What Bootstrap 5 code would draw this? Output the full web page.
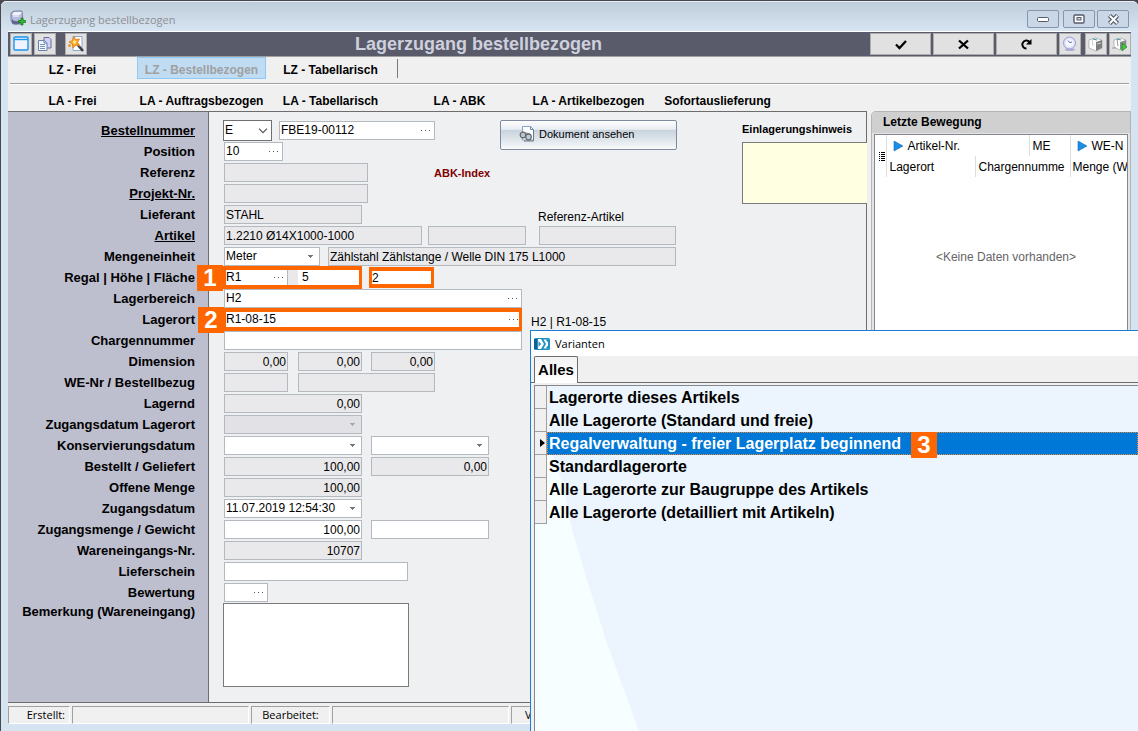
<!DOCTYPE html>
<html lang="de">
<head>
<meta charset="utf-8">
<meta name="viewport" content="width=device-width, initial-scale=1">
<title>Lagerzugang bestellbezogen</title>
<link href="https://cdn.jsdelivr.net/npm/bootstrap@5.3.0/dist/css/bootstrap.min.css" rel="stylesheet">
<style>
body{font-family:"Liberation Sans",Arial,sans-serif;font-size:12px;line-height:16px;color:#000;background:#4a464f}
.segoe{font-family:"Open Sans","Noto Sans",sans-serif;font-size:11px}
.win{border:1px solid #4a464f;border-width:1px 0 0 1px;border-radius:6px 6px 0 0;background:#d6e4f1;padding:0 7px 7px}
.win-title{height:30px;margin:0 -7px;padding:8px 9px 0 9px;color:#8e8e92;background:linear-gradient(#bfcddb,#d7e5f2);border-radius:6px 6px 0 0;border-top:1px solid #e6eef5}
.cap{width:32px;height:18px;padding:0;border:1px solid #8495ac;border-radius:2px;background:#c9d7e6;display:flex;align-items:center;justify-content:center}
.toolbar{background:#595b6b;border-top:1px solid #fff;border-bottom:1px solid #a0a0a0;padding:1px 0 1px 2px;height:26px}
.toolbar h1{font-size:18px;line-height:22px;color:#ced0dc;font-weight:bold;margin:0}
.tb{width:22px;height:22px;padding:0;border:1px solid #adadad;background:#e1e1e1;display:flex;align-items:center;justify-content:center}
.tb-wide{width:61px}
.menus{background:#f0f0f0}
.menus a{width:129px;text-align:center;color:#000;font-weight:bold;text-decoration:none;padding:5px 0 2px;line-height:16px}
.menu-a{height:27px;margin:0 2px;border-bottom:1px solid #a0a0a0}
.menu-b{height:27px;margin:0 2px;border-top:1px solid #fff;padding-top:3px}
.menus a.current{background:#c0dcf3;color:#a0a0a0;border:1px solid #90c8f6;height:22px;padding-top:4px}
.menus .nav-in{margin-left:-2px}
.bar{width:1px;height:19px;background:#7a7a7a;margin:2px 0 0 2px}
.mainform{border:1px solid #6d6d6d;border-width:1px 1px 1px 0;background:linear-gradient(to right,#bdbece 200px,#6d6d6d 200px,#6d6d6d 201px,#eff0f2 201px)}
.rows{padding-top:8px}
.r{display:flex;align-items:center;height:21px}
.r>label:first-child{width:187px;margin-right:29px;text-align:right;font-size:13px;font-weight:bold;flex:none}
.r>.u{text-decoration:underline}
.f{height:19px;border:1px solid #b4b8bf;background:#fff;display:flex;align-items:center;flex:none;font-size:12px;padding:0 3px 0 1px;border-radius:0;color:#000;line-height:15px}
.f input{border:0;background:transparent;padding:0;width:100%;min-width:0;outline:0;color:#000;line-height:15px}
input.f{outline:0}
.f.text-end{padding-right:1px}
.ro{background:#e9e9eb}
select.f{appearance:none;background:#fff url("data:image/svg+xml,%3Csvg xmlns='http://www.w3.org/2000/svg' width='7' height='4'%3E%3Cpath d='M1 0h5v1h-1v1h-1v1h-1v-1h-1v-1h-1z' fill='%23777'/%3E%3C/svg%3E") no-repeat right 5px center}
select.f.dis{background-color:#e2e1e6;opacity:1;background-image:url("data:image/svg+xml,%3Csvg xmlns='http://www.w3.org/2000/svg' width='7' height='4'%3E%3Cpath d='M1 0h5v1h-1v1h-1v1h-1v-1h-1v-1h-1z' fill='%23aaa'/%3E%3C/svg%3E")}
select.f.big{height:21px;border-color:#707070;background-image:url("data:image/svg+xml,%3Csvg xmlns='http://www.w3.org/2000/svg' width='10' height='6'%3E%3Cpath d='M1 .7l4 4 4-4' fill='none' stroke='%23555' stroke-width='1.2'/%3E%3C/svg%3E");background-position:right 3px center;margin-left:-1px}
.dots{border:0;background:none;padding:0;width:10px;height:15px;flex:none;display:flex;align-items:center}
.w44{width:44px}.w49{width:49px}.w59{width:59px}.w64{width:64px}.w96{width:96px}.w98{width:98px}.w118{width:118px}.w137{width:137px}.w138{width:138px}.w144{width:144px}.w156{width:156px}.w184{width:184px}.w198{width:198px}.w298{width:298px}.w348{width:348px}
.g6{margin-left:6px}.g8{margin-left:8px}.g9{margin-left:9px}.g13{margin-left:13px}
.g10{margin-left:10px}
.hl{display:flex;height:23px;border:3px solid #f60;border-width:4px 3px 4px 3px;margin-left:-1px;background:#e9e9eb;flex:none}
.hl .f{border:0;height:15px;padding-left:0}
.hl .f.split{border-right:1px solid #b4b8bf}
.step{width:26px;height:26px;background:#f60;color:#fff;font-size:24px;line-height:26px;font-weight:bold;text-align:center;flex:none}
.docbtn{width:177px;height:30px;border:1px solid #7f8ba0;border-radius:2px;background:linear-gradient(#fdfdfe,#e9edf2 30%,#c9d3dd 32%,#dde4ea 65%,#fafbfc);font-size:11px;padding:0 0 2px 18px;display:flex;align-items:center;align-self:flex-start;color:#000}
.hint{width:124px;padding-top:9px}
.hint textarea{width:125px;height:62px;display:block;background:#ffffe1;border:1px solid #7a7a7a;border-right:0;resize:none;margin-top:5px}
.abk{color:#800000;font-weight:bold;font-size:11px;margin-left:66px}
.note{width:186px;height:84px;border:1px solid #7a7a7a;margin-left:-1px;resize:none;background:#fff;flex:none}
.side{width:260px;border:1px solid #b5b5b5;border-bottom:0;border-radius:5px 0 0 0;background:#e4e4e4;margin-left:4px}
.side h2{font-size:12px;font-weight:bold;background:#d0d0d0;line-height:20px;height:21px;margin:0;padding-left:11px;border-radius:5px 0 0 0}
.grid{border:1px solid #828790;background:#fff;margin:1px 2px 0 2px}
.grid table{table-layout:fixed;width:252px}
.grid th{font-weight:normal;white-space:nowrap;overflow:hidden;height:21px;padding:0 0 0 3px;border-left:1px solid #ddd}
.grid th.last{padding-left:2px}
.grid td{color:#666;text-align:center;padding:72px 0 0 10px}
.status{height:21px;background:#f0f0f0;padding-top:3px;gap:2px}
.status div{border:1px solid #a0a0a0;border-color:#a0a0a0 #fff #fff #a0a0a0;height:18px}
.dlg{position:absolute;left:530px;top:330px;right:0;bottom:0;border:1px solid #1a7fd4;border-width:1px 0 0 1px;background:#f0f0f0;overflow:hidden}
.dlg-title{height:25px;background:#fff;padding-left:3px;gap:5px}
.tabs{height:27px;padding-left:3px;border-bottom:1px solid #6d6d6d;flex:none}
.tabs button{width:44px;height:27px;border:1px solid #6d6d6d;border-bottom:0;border-radius:2px 2px 0 0;background:linear-gradient(#f3f3f3,#fff);font-size:15px;font-weight:bold;padding:0;white-space:nowrap}
.list{border:1px solid #828790;border-width:1px 0 0 1px;margin:2px 0 0 3px;background:#ecf5fd;position:relative}
.list>svg{position:absolute;left:0;top:62px}
.it{position:relative;display:flex;width:100%;height:23px;padding:0;border:0;background:none;font-size:16px;line-height:24px;font-weight:bold;text-align:left;color:#000}
.it i{width:12px;height:23px;background:#f0f0f0;border:1px solid #a0a0a0;border-width:0 1px 1px 0;flex:none;display:flex;align-items:center;justify-content:flex-end}
.it span{padding-left:2px}
.it.sel span:not(.step){background:#0078d7;color:#fff;flex:1;border:1px dotted #e08a3c;padding-left:1px;line-height:22px}
.it .step{position:absolute;left:376px;top:0;padding:0;z-index:1}
</style>
</head>
<body>
<div class="vh-100 position-relative overflow-hidden">
<div class="win h-100 d-flex flex-column">
  <header class="win-title d-flex align-items-start flex-shrink-0">
    <svg width="16" height="16" viewBox="0 0 16 16" class="me-1"><path d="M1 3l3-2h8l1 10-2 3H3l-2-3z" fill="#b6badc" stroke="#6d6f9c" stroke-width=".8"/><path d="M4 2h8l-2 3H2z" fill="#f1f2fa"/><path d="M2 9c2 3 7 3 10 0v3c-3 3-8 3-10 1z" fill="#60668e"/><path d="M3 6h6" stroke="#fff"/><path d="M11 8h2v2.500h2.500v2H13V15h-2v-2.500H8.500v-2H11z" fill="#2ec42e" stroke="#146e14" stroke-width=".7"/></svg>
    <span class="segoe flex-grow-1 pt-1 lh-1">Lagerzugang bestellbezogen</span>
    <button class="cap" aria-label="Minimieren"><svg width="12" height="7"><rect x=".5" y="1.500" width="11" height="4" rx="1" fill="#fff" stroke="#555b6b"/></svg></button>
    <button class="cap ms-1" style="margin-right:2px" aria-label="Maximieren"><svg width="12" height="10"><rect x="1" y="1" width="10" height="8" rx="1" fill="#fff" stroke="#555b6b" stroke-width="1.400"/><rect x="4" y="3.500" width="4" height="2.500" fill="#c9d7e6" stroke="#555b6b"/></svg></button>
    <button class="cap" aria-label="Schließen"><svg width="13" height="11"><path d="M2.500 1.500l8 8M10.500 1.500l-8 8" stroke="#555b6b" stroke-width="4.400"/><path d="M2.800 1.800l7.400 7.400M10.200 1.800l-7.400 7.400" stroke="#fff" stroke-width="2"/></svg></button>
  </header>

  <div class="toolbar d-flex flex-shrink-0">
    <button class="tb" aria-label="Fenster"><svg width="16" height="16"><rect x="1" y="1" width="14" height="13" rx="1" fill="#eef3ff" stroke="#1a95f0" stroke-width="1.400"/><path d="M1 3.500h14" stroke="#1a95f0" stroke-width="1.400"/></svg></button>
    <button class="tb" style="margin-left:2px" aria-label="Kopieren"><svg width="16" height="16"><path d="M7 1.500h5l2 2V12H7z" fill="#cfd3f4" stroke="#6d679f"/><path d="M1.500 4.500h6L10 7v7.500H1.500z" fill="#eef6ff" stroke="#6a83ac"/><path d="M3 8.500h5M3 10.500h5M3 12.500h5" stroke="#7d93bb"/><path d="M7 4.500V7h3" fill="none" stroke="#6a83ac"/></svg></button>
    <button class="tb" style="margin-left:9px" aria-label="Assistent"><svg width="18" height="18"><path d="M6 1.500h9v14H6z" fill="#fff" stroke="#8ca9d4"/><path d="M10 9l6 7" stroke="#3c3c4a" stroke-width="2.600"/><path d="M7 1l1.500 3.500L12.500 4 10.500 7.500 13 11l-4-1-3 3-.5-4L2 7l3.500-1.500z" fill="#ffad22" stroke="#d8791a" stroke-width=".8"/><circle cx="7.500" cy="7" r="1.700" fill="#ffe78a"/><circle cx="2.500" cy="10.500" r="1.500" fill="#f29b2b"/></svg></button>
    <h1 class="flex-grow-1 text-center">Lagerzugang bestellbezogen</h1>
    <button class="tb tb-wide" aria-label="OK"><svg width="12" height="11"><path d="M1 5.500l3.500 3.500L11 2" fill="none" stroke="#000" stroke-width="2.300"/></svg></button>
    <button class="tb tb-wide" style="margin-left:2px" aria-label="Abbrechen"><svg width="11" height="11"><path d="M1 1.500l9 8M10 1.500l-9 8" stroke="#000" stroke-width="2.300"/></svg></button>
    <button class="tb tb-wide" style="margin-left:2px" aria-label="Aktualisieren"><svg width="12" height="12"><path d="M5.500 10.500A4 4 0 1 1 8.500 4" fill="none" stroke="#000" stroke-width="2"/><path d="M10.500 1v5.500H5z"/></svg></button>
    <button class="tb" style="margin-left:2px" aria-label="Verlauf"><svg width="16" height="16"><ellipse cx="8" cy="13.500" rx="5" ry="1.500" fill="#aeb0d6"/><circle cx="7.500" cy="7" r="6" fill="#dfe2fb" stroke="#9a9ed4"/><circle cx="7.500" cy="7" r="3.800" fill="#f7f8ff"/><path d="M6 4.500l1.500 2L10 6" fill="none" stroke="#5e69b0"/></svg></button>
    <button class="tb" style="margin-left:4px" aria-label="Drucken"><svg width="16" height="16"><path d="M1 4l6-2 7 2v8l-6 3-7-3z" fill="#fff" stroke="#aaa" stroke-width=".8"/><path d="M8 6l6-2v8l-6 3z" fill="#7b7f80"/><path d="M4 3l1 7" stroke="#c8d0d0"/><path d="M9 8l4-1" stroke="#c8d0d0"/><path d="M5 3l4 1" stroke="#2d98a3"/></svg></button>
    <button class="tb" style="margin-left:2px" aria-label="Drucken und ausführen"><svg width="16" height="16"><path d="M2 4l6-2 6 2v7l-6 3-6-3z" fill="#fff" stroke="#aaa" stroke-width=".8"/><path d="M8 6l6-2v7l-6 3z" fill="#8b8f90"/><path d="M0 12h4M5 3l1 7" stroke="#999"/><path d="M5 3l4 1" stroke="#2d98a3"/><path d="M10 7l5 4-5 4z" fill="#43c943" stroke="#198419" stroke-width=".7"/></svg></button>
  </div>

  <nav class="menus flex-shrink-0">
    <div class="menu-a"><div class="nav-in d-flex"><a href="#">LZ - Frei</a><a href="#" class="current">LZ - Bestellbezogen</a><a href="#">LZ - Tabellarisch</a><div class="bar"></div></div></div>
    <div class="menu-b"><div class="nav-in d-flex"><a href="#">LA - Frei</a><a href="#">LA - Auftragsbezogen</a><a href="#">LA - Tabellarisch</a><a href="#">LA - ABK</a><a href="#">LA - Artikelbezogen</a><a href="#">Sofortauslieferung</a></div></div>
  </nav>

  <main class="d-flex flex-grow-1 menus" style="min-height:0">
    <form class="mainform flex-grow-1 d-flex justify-content-between">
      <div class="rows">
        <div class="r"><label for="a1" class="u">Bestellnummer</label><select id="a1" class="f big w49"><option>E</option></select><div class="f w156" style="margin-left:7px"><input aria-label="Bestellung" value="FBE19-00112"><button type="button" class="dots" aria-label="Auswahl"><svg width="9" height="2"><path d="M0 0h1v1H0zM4 0h1v1H4zM8 0h1v1H8z" fill="#555"/></svg></button></div>
          <button type="button" class="docbtn" style="margin-left:65px"><svg width="16" height="18" class="me-1"><path d="M3.500 1.500h8l3 3V15h-11z" fill="#f8fbff" stroke="#8fa2bd"/><path d="M11.500 1.500v3h3" fill="none" stroke="#6f86a8"/><path d="M14.500 5v11H5" fill="none" stroke="#6a7482"/><circle cx="4" cy="10" r="2.800" fill="#b9c5ce" stroke="#666" stroke-width="1.200"/><circle cx="9.500" cy="12" r="2.800" fill="#b5d0e0" stroke="#666" stroke-width="1.200"/><path d="M3 7l8 2" stroke="#777" stroke-width="1.200"/></svg>Dokument ansehen</button></div>
        <div class="r"><label for="a2">Position</label><div class="f w59"><input id="a2" value="10"><button type="button" class="dots" aria-label="Auswahl"><svg width="9" height="2"><path d="M0 0h1v1H0zM4 0h1v1H4zM8 0h1v1H8z" fill="#555"/></svg></button></div></div>
        <div class="r"><label for="a3">Referenz</label><input id="a3" class="f ro w144" readonly><span class="abk">ABK-Index</span></div>
        <div class="r"><label for="a4" class="u">Projekt-Nr.</label><input id="a4" class="f ro w144" readonly></div>
        <div class="r"><label for="a5">Lieferant</label><input id="a5" class="f ro w138" readonly value="STAHL"><label for="a5b" class="pt-1" style="margin-left:176px">Referenz-Artikel</label></div>
        <div class="r"><label for="a6" class="u">Artikel</label><input id="a6" class="f ro w198" readonly value="1.2210 Ø14X1000-1000"><input aria-label="Artikelzusatz" class="f ro w98 g6" readonly><input id="a5b" class="f ro w137 g13" readonly></div>
        <div class="r"><label for="a7">Mengeneinheit</label><select id="a7" class="f w96"><option>Meter</option></select><input aria-label="Bezeichnung" class="f ro w348 g8" readonly value="Zählstahl Zählstange / Welle DIN 175 L1000"></div>
        <div class="r"><label for="a8">Regal | Höhe | Fläche</label>
          <div class="hl position-relative" style="width:139px"><div class="f split" style="width:62px"><input id="a8" value="R1"><button type="button" class="dots" aria-label="Auswahl"><svg width="9" height="2"><path d="M0 0h1v1H0zM4 0h1v1H4zM8 0h1v1H8z" fill="#555"/></svg></button></div><input aria-label="Höhe" class="f g10 ps-1 flex-grow-1" style="width:20px" value="5"><span class="step position-absolute" style="left:-29px;top:-5px">1</span></div>
          <div class="hl" style="width:65px;height:21px;margin-left:7px"><input aria-label="Fläche" class="f w-100 h-100" value="2"></div></div>
        <div class="r"><label for="a9">Lagerbereich</label><div class="f w298"><input id="a9" value="H2"><button type="button" class="dots" aria-label="Auswahl"><svg width="9" height="2"><path d="M0 0h1v1H0zM4 0h1v1H4zM8 0h1v1H8z" fill="#555"/></svg></button></div></div>
        <div class="r"><label for="a10">Lagerort</label><div class="hl position-relative" style="width:299px"><div class="f w-100 pe-0"><input id="a10" value="R1-08-15"><button type="button" class="dots" aria-label="Auswahl"><svg width="9" height="2"><path d="M0 0h1v1H0zM4 0h1v1H4zM8 0h1v1H8z" fill="#555"/></svg></button></div><span class="step position-absolute" style="left:-28px;top:-5px">2</span></div><span class="g9 pt-1">H2 | R1-08-15</span></div>
        <div class="r"><label for="a11">Chargennummer</label><input id="a11" class="f w298"></div>
        <div class="r"><label for="a12">Dimension</label><input id="a12" class="f ro w64 text-end" readonly value="0,00"><input aria-label="Dimension 2" class="f ro w64 text-end g10" readonly value="0,00"><input aria-label="Dimension 3" class="f ro w64 text-end g9" readonly value="0,00"></div>
        <div class="r"><label for="a13">WE-Nr / Bestellbezug</label><input id="a13" class="f ro w64" readonly><input aria-label="Bestellbezug" class="f ro w137 g10" readonly></div>
        <div class="r"><label for="a14">Lagernd</label><input id="a14" class="f ro w138 text-end" readonly value="0,00"></div>
        <div class="r"><label for="a15">Zugangsdatum Lagerort</label><select id="a15" class="f dis w138" disabled><option></option></select></div>
        <div class="r"><label for="a16">Konservierungsdatum</label><select id="a16" class="f w138"><option></option></select><select aria-label="Konservierung bis" class="f w118 g9"><option></option></select></div>
        <div class="r"><label for="a17">Bestellt / Geliefert</label><input id="a17" class="f ro w138 text-end" readonly value="100,00"><input aria-label="Geliefert" class="f ro w118 text-end g9" readonly value="0,00"></div>
        <div class="r"><label for="a18">Offene Menge</label><input id="a18" class="f ro w138 text-end" readonly value="100,00"></div>
        <div class="r"><label for="a19">Zugangsdatum</label><select id="a19" class="f w138"><option>11.07.2019 12:54:30</option></select></div>
        <div class="r"><label for="a20">Zugangsmenge / Gewicht</label><input id="a20" class="f w138 text-end" value="100,00"><input aria-label="Gewicht" class="f w118 g9"></div>
        <div class="r"><label for="a21">Wareneingangs-Nr.</label><input id="a21" class="f ro w138 text-end" readonly value="10707"></div>
        <div class="r"><label for="a22">Lieferschein</label><input id="a22" class="f w184"></div>
        <div class="r"><label for="a23">Bewertung</label><div class="f w44"><input id="a23"><button type="button" class="dots" aria-label="Auswahl"><svg width="9" height="2"><path d="M0 0h1v1H0zM4 0h1v1H4zM8 0h1v1H8z" fill="#555"/></svg></button></div></div>
        <div class="r align-items-start"><label for="a24" style="padding-top:1px">Bemerkung (Wareneingang)</label><textarea id="a24" class="note"></textarea></div>
      </div>
      <div class="hint"><label for="h1" class="fw-bold text-nowrap" style="font-size:11px">Einlagerungshinweis</label><textarea id="h1"></textarea></div>
    </form>
    <aside class="side flex-shrink-0 d-flex flex-column">
      <h2>Letzte Bewegung</h2>
      <div class="grid flex-grow-1 overflow-hidden">
        <table>
          <colgroup><col style="width:11px"><col style="width:89px"><col style="width:54px"><col style="width:41px"><col></colgroup>
          <thead>
            <tr><th rowspan="2" class="border-0 ps-1" aria-label="Spalten"><svg width="7" height="9"><path d="M0 .5h1m1 0h4M0 2.500h1m1 0h4M0 4.500h1m1 0h4M0 6.500h1m1 0h4M0 8.500h1m1 0h4" stroke="#000"/></svg></th>
              <th colspan="2"><svg width="10" height="10" style="margin:0 5px 0 3px"><path d="M1 0l9 5-9 5z" fill="#1b8fe8" stroke="#1767b0" stroke-width=".6"/></svg>Artikel-Nr.</th><th>ME</th><th><svg width="10" height="10" style="margin:0 5px 0 3px"><path d="M1 0l9 5-9 5z" fill="#1b8fe8" stroke="#1767b0" stroke-width=".6"/></svg>WE-N</th></tr>
            <tr><th>Lagerort</th><th colspan="2">Chargennumme</th><th class="last">Menge (W</th></tr>
          </thead>
          <tbody><tr><td colspan="5">&lt;Keine Daten vorhanden&gt;</td></tr></tbody>
        </table>
      </div>
    </aside>
  </main>

  <footer class="status segoe d-flex flex-shrink-0">
    <div class="text-end pe-1" style="width:62px">Erstellt:</div><div style="width:177px"></div><div class="text-center" style="width:79px">Bearbeitet:</div><div style="width:177px"></div><div class="flex-grow-1" style="padding-left:13px">V</div>
  </footer>
</div>

<section class="dlg d-flex flex-column" role="dialog" aria-label="Varianten">
  <div class="dlg-title d-flex align-items-center flex-shrink-0"><svg width="16" height="12"><rect width="16" height="12" rx="1.500" fill="#1f8fc4"/><path d="M0 1h3v10H0z" fill="#12628f"/><path d="M4 1h3l3 5-3 5H4z" fill="#fff"/><path d="M4.500 3l2.500 3-2.500 3z" fill="#1f8fc4"/><path d="M9.500 1.500H14v9H9.500L12 6z" fill="#fff"/><path d="M11.500 1.500l2.500 3V1.500zM11.500 10.500l2.500-3v3z" fill="#1f8fc4"/></svg><span class="segoe">Varianten</span></div>
  <div class="tabs"><button>Alles</button></div>
  <div class="list flex-grow-1">
    <svg width="120" height="300" viewBox="0 0 120 300"><path d="M0 0h15L27 34 38 85 49 122 72 195 104 283 110 300H0z" fill="#f7feff"/></svg>
    <button class="it"><i></i><span>Lagerorte dieses Artikels</span></button>
    <button class="it"><i></i><span>Alle Lagerorte (Standard und freie)</span></button>
    <button class="it sel"><i><svg width="6" height="10"><path d="M0 1l5 4-5 4z"/></svg></i><span>Regalverwaltung - freier Lagerplatz beginnend</span><span class="step">3</span></button>
    <button class="it"><i></i><span>Standardlagerorte</span></button>
    <button class="it"><i></i><span>Alle Lagerorte zur Baugruppe des Artikels</span></button>
    <button class="it"><i></i><span>Alle Lagerorte (detailliert mit Artikeln)</span></button>
  </div>
</section>
</div>
<script src="https://cdn.jsdelivr.net/npm/bootstrap@5.3.0/dist/js/bootstrap.bundle.min.js"></script>
</body>
</html>
